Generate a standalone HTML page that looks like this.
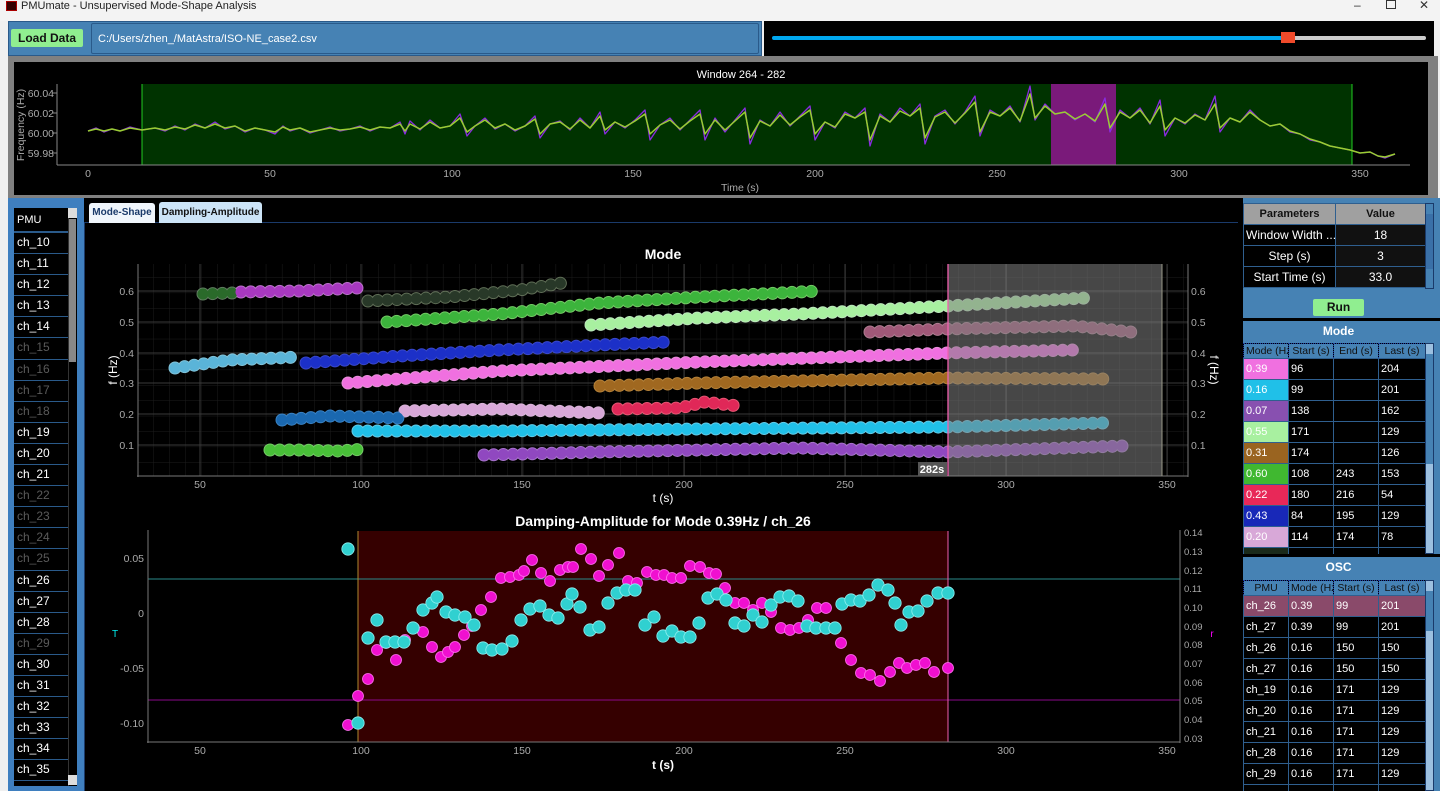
<!DOCTYPE html>
<html><head><meta charset="utf-8"><style>
*{margin:0;padding:0;box-sizing:border-box}
html,body{width:1440px;height:791px;overflow:hidden}
body{background:#f0f0f0;font-family:"Liberation Sans",sans-serif;position:relative}
.a{position:absolute}
table{border-collapse:collapse;table-layout:fixed}
td{border:1px solid #2f5f8f;color:#fff;font-size:11px;height:21px;padding:0 2px;white-space:nowrap;overflow:hidden;background:#000}
.hd td{background:#4682b4;color:#111;text-align:center;border:1px dotted #1a3aa0;height:15px;font-size:10.5px}
</style></head><body>
<!-- title bar -->
<div class="a" style="left:0;top:0;width:1440px;height:21px;background:#f3f3f3"></div>
<div class="a" style="left:6px;top:1px;width:11px;height:10px;background:#300;border:1px solid #a00"></div>
<div class="a" style="left:21px;top:0;font-size:11px;color:#222;line-height:12px">PMUmate - Unsupervised Mode-Shape Analysis</div>
<div class="a" style="left:1354px;top:-2px;font-size:12px;color:#333">–</div>
<div class="a" style="left:1386px;top:0;width:10px;height:9px;border:1px solid #333"></div>
<div class="a" style="left:1419px;top:-2px;font-size:12px;color:#333">✕</div>
<!-- top row -->
<div class="a" style="left:8px;top:21px;width:754px;height:35px;background:#4682b4;border:1px solid #2a5a8a"></div>
<div class="a" style="left:11px;top:29px;width:72px;height:18px;background:#90ee90;border-radius:2px;font-size:12px;font-weight:bold;color:#111;text-align:center;line-height:18px">Load Data</div>
<div class="a" style="left:91px;top:23px;width:668px;height:31px;background:#4682b4;border:1px solid #2a5a8a;border-radius:2px;font-size:11px;color:#fff;line-height:30px;padding-left:6px">C:/Users/zhen_/MatAstra/ISO-NE_case2.csv</div>
<div class="a" style="left:764px;top:21px;width:670px;height:35px;background:#000"></div>
<div class="a" style="left:772px;top:36px;width:515px;height:4px;background:#00a8f0;border-radius:2px"></div>
<div class="a" style="left:1290px;top:36px;width:136px;height:4px;background:#ccc;border-radius:2px"></div>
<div class="a" style="left:1281px;top:32px;width:14px;height:11px;background:#f04a2a"></div>
<!-- overview -->
<div class="a" style="left:8px;top:56px;width:1430px;height:142px;background:#808080"></div>
<div class="a" style="left:14px;top:62px;width:1414px;height:133px;background:#000"></div>
<svg class="a" style="left:0;top:0" width="1440" height="200">
<rect x="142" y="84" width="1210" height="81" fill="#003300"/>
<rect x="1051" y="84" width="65" height="81" fill="#7a1a7a"/>
<line x1="142" y1="84" x2="142" y2="165" stroke="#2c2"/><line x1="1352" y1="84" x2="1352" y2="165" stroke="#2c2"/>
<line x1="57" y1="84" x2="57" y2="165" stroke="#888"/><line x1="57" y1="165" x2="1410" y2="165" stroke="#888"/>
<g stroke="#888"><line x1="52" y1="93" x2="57" y2="93"/><line x1="52" y1="113" x2="57" y2="113"/><line x1="52" y1="133" x2="57" y2="133"/><line x1="52" y1="153" x2="57" y2="153"/></g>
<g font-size="10.5" fill="#aaa" font-family="Liberation Sans" text-anchor="end"><text x="54" y="97">60.04</text><text x="54" y="117">60.02</text><text x="54" y="137">60.00</text><text x="54" y="157">59.98</text></g>
<g font-size="10.5" fill="#aaa" font-family="Liberation Sans" text-anchor="middle"><text x="88" y="177">0</text><text x="270" y="177">50</text><text x="452" y="177">100</text><text x="633" y="177">150</text><text x="815" y="177">200</text><text x="997" y="177">250</text><text x="1179" y="177">300</text><text x="1360" y="177">350</text><text x="740" y="191">Time (s)</text></g>
<text x="24" y="125" transform="rotate(-90 24 125)" font-size="10.5" fill="#aaa" font-family="Liberation Sans" text-anchor="middle">Frequency (Hz)</text>
<text x="741" y="78" font-size="11" fill="#fff" font-family="Liberation Sans" text-anchor="middle">Window 264 - 282</text>
<g fill="none" stroke-linejoin="round">
<path d="M88,131 L96,128 104,132 112,129 120,131 130,127 142,130 155,128 165,131 175,126 185,130 195,124 205,128 215,122 225,129 235,126 245,132 255,128 265,130 275,134 283,126 290,131 300,128 310,133 320,130 330,127 340,131 350,129 360,126 370,131 380,127 390,128 400,122 405,134 410,121 420,130 430,120 440,128 450,126 460,114 467,136 475,126 485,118 495,129 505,124 515,131 525,126 535,116 540,138 550,124 560,121 570,130 580,118 590,128 600,112 605,134 615,122 625,128 635,120 645,110 650,140 660,125 670,118 680,130 690,120 700,110 705,140 715,118 725,132 735,120 745,108 750,144 760,120 770,126 780,112 790,126 800,116 810,106 815,140 825,122 835,128 845,112 855,118 865,108 870,146 880,114 890,122 900,108 910,116 920,104 925,144 935,116 945,110 955,124 965,112 975,96 980,136 990,110 1000,116 1010,106 1020,122 1030,86 1035,120 1045,104 1055,114 1065,112 1075,120 1085,114 1095,122 1105,98 1110,132 1120,110 1130,118 1140,108 1150,124 1160,100 1165,136 1175,118 1185,124 1195,114 1205,120 1215,96 1220,132 1230,118 1240,122 1250,110 1260,120 1270,126 1280,124 1290,132 1300,134 1310,140 1320,142 1330,146 1340,148 1350,150 1360,153 1370,152 1378,156 1385,158 1395,154" stroke="#8a2be2" stroke-width="1.3"/>
<path d="M88,131 L96,129 104,131 112,129 120,131 130,128 142,130 155,128 165,130 175,127 185,129 195,125 205,128 215,124 225,128 235,126 245,131 255,128 265,130 275,132 283,127 290,130 300,128 310,132 320,130 330,128 340,130 350,129 360,127 370,130 380,127 390,128 400,124 405,131 410,124 420,129 430,122 440,128 450,126 460,118 467,132 475,126 485,120 495,128 505,124 515,130 525,126 535,119 540,134 550,124 560,122 570,129 580,120 590,128 600,116 605,130 615,122 625,127 635,121 645,114 650,134 660,125 670,120 680,129 690,121 700,114 705,134 715,120 725,130 735,121 745,112 750,138 760,121 770,126 780,115 790,125 800,117 810,110 815,134 825,122 835,127 845,114 855,118 865,112 870,140 880,116 890,122 900,111 910,116 920,108 925,138 935,117 945,112 955,123 965,113 975,102 980,132 990,112 1000,116 1010,108 1020,121 1030,94 1035,118 1045,106 1055,114 1065,112 1075,119 1085,114 1095,121 1105,104 1110,128 1120,112 1130,118 1140,110 1150,123 1160,106 1165,130 1175,118 1185,123 1195,115 1205,120 1215,104 1220,128 1230,118 1240,122 1250,112 1260,120 1270,126 1280,124 1290,131 1300,134 1310,139 1320,142 1330,146 1340,148 1350,150 1360,153 1370,152 1378,156 1385,157 1395,154" stroke="#9acd32" stroke-width="1.5"/>
</g>
</svg>
<!-- left panel -->
<div class="a" style="left:8px;top:198px;width:76px;height:593px;background:#3f7fbf"></div>
<div class="a" style="left:14px;top:208px;width:54px;height:578px;background:#000"></div>
<div class="a" style="left:68px;top:208px;width:9px;height:578px;background:#000;border-left:1px solid #333"></div>
<div class="a" style="left:69px;top:219px;width:7px;height:143px;background:#888"></div>
<div class="a" style="left:68px;top:208px;width:9px;height:10px;background:#ddd"></div>
<div class="a" style="left:68px;top:775px;width:9px;height:10px;background:#ddd"></div>
<div class="a" style="left:14px;top:208px;width:54px;height:578px;overflow:hidden">
<div style="height:25px;font-size:11px;color:#fff;padding:6px 3px;border-bottom:2px solid #2a5a8a">PMU</div>
<div id="chs"></div>
</div>
<script>
var h='',n=[10,11,12,13,14,15,16,17,18,19,20,21,22,23,24,25,26,27,28,29,30,31,32,33,34,35],dim=[15,16,17,18,22,23,24,25,29];
n.forEach(function(k){h+='<div style="height:21.1px;line-height:19px;font-size:12px;padding-left:3px;border-bottom:1px solid #2a5a8a;color:'+(dim.indexOf(k)>=0?'#5a5a5a':'#fff')+'">ch_'+k+'</div>'});
document.getElementById('chs').innerHTML=h;
</script>
<!-- main -->
<div class="a" style="left:84px;top:198px;width:1156px;height:593px;background:#000"></div>
<div class="a" style="left:84px;top:222px;width:1154px;height:1px;background:#1a3a6a"></div>
<div class="a" style="left:84px;top:222px;width:1px;height:569px;background:#1a3a6a"></div>
<div class="a" style="left:89px;top:203px;width:66px;height:20px;background:#f0f6fc;border-radius:3px 3px 0 0;font-size:10px;font-weight:bold;color:#1a3a6a;text-align:center;line-height:20px">Mode-Shape</div>
<div class="a" style="left:159px;top:202px;width:103px;height:21px;background:#cce4f7;border-radius:3px 3px 0 0;font-size:10px;font-weight:bold;color:#111;text-align:center;line-height:21px">Dampling-Amplitude</div>
<svg class="a" style="left:0;top:0" width="1240" height="791" font-family="Liberation Sans">
<defs>
<pattern id="mg" x="137" y="0" width="16.1" height="15.4" patternUnits="userSpaceOnUse"><path d="M0,0 V15.4 M0,0 H16.1" stroke="#1c1c1c" fill="none"/></pattern>
</defs>
<text x="663" y="259" font-size="14" font-weight="bold" fill="#fff" text-anchor="middle">Mode</text>
<rect x="138" y="264" width="1050" height="212" fill="url(#mg)"/>
<g stroke="#3a3a3a"><line x1="138" y1="291" x2="1188" y2="291"/><line x1="138" y1="322" x2="1188" y2="322"/><line x1="138" y1="353" x2="1188" y2="353"/><line x1="138" y1="383" x2="1188" y2="383"/><line x1="138" y1="414" x2="1188" y2="414"/><line x1="138" y1="445" x2="1188" y2="445"/>
<line x1="200" y1="264" x2="200" y2="476"/><line x1="361" y1="264" x2="361" y2="476"/><line x1="522" y1="264" x2="522" y2="476"/><line x1="684" y1="264" x2="684" y2="476"/><line x1="845" y1="264" x2="845" y2="476"/><line x1="1006" y1="264" x2="1006" y2="476"/><line x1="1167" y1="264" x2="1167" y2="476"/></g>
<g stroke="#777"><line x1="138" y1="264" x2="138" y2="477"/><line x1="137" y1="476" x2="1188" y2="476"/><line x1="1188" y1="264" x2="1188" y2="477"/></g>
<g font-size="10.5" fill="#aaa" text-anchor="end"><text x="134" y="295">0.6</text><text x="134" y="326">0.5</text><text x="134" y="357">0.4</text><text x="134" y="387">0.3</text><text x="134" y="418">0.2</text><text x="134" y="449">0.1</text></g>
<g font-size="10.5" fill="#aaa"><text x="1191" y="295">0.6</text><text x="1191" y="326">0.5</text><text x="1191" y="357">0.4</text><text x="1191" y="387">0.3</text><text x="1191" y="418">0.2</text><text x="1191" y="449">0.1</text></g>
<g font-size="10.5" fill="#aaa" text-anchor="middle"><text x="200" y="488">50</text><text x="361" y="488">100</text><text x="522" y="488">150</text><text x="684" y="488">200</text><text x="845" y="488">250</text><text x="1006" y="488">300</text><text x="1167" y="488">350</text></g>
<text x="663" y="502" font-size="12" fill="#fff" text-anchor="middle">t (s)</text>
<text x="117" y="370" transform="rotate(-90 117 370)" font-size="12" fill="#fff" text-anchor="middle">f (Hz)</text>
<text x="1210" y="370" transform="rotate(90 1210 370)" font-size="12" fill="#fff" text-anchor="middle">f (Hz)</text>
<g fill="none" stroke-linecap="round" stroke-dasharray="0 9.67" stroke-linejoin="round">
<g stroke-width="13" opacity="0.9">
<polyline stroke="#6a8a6a" points="203,294 232,293"/>
<polyline stroke="#d080e0" points="241,292 300,291 358,288"/>
<polyline stroke="#6a7a60" points="368,301 450,297 520,290 562,283"/>
<polyline stroke="#80e070" points="387,322 500,314 600,303 700,297 820,291"/>
<polyline stroke="#d0ffd0" points="591,325 700,318 800,314 948,306 1085,298"/>
<polyline stroke="#c08aa0" points="870,332 948,329 1075,326 1140,333"/>
<polyline stroke="#4050e0" points="306,363 400,356 500,350 600,345 668,342"/>
<polyline stroke="#90d8f0" points="175,368 230,360 300,357"/>
<polyline stroke="#ffa0f0" points="348,383 500,371 700,362 948,353 1075,350"/>
<polyline stroke="#c89040" points="600,386 700,383 948,378 1103,379"/>
<polyline stroke="#ff6080" points="618,409 680,408 705,402 738,406"/>
<polyline stroke="#f0c8f0" points="405,411 500,409 600,413"/>
<polyline stroke="#4090d8" points="282,420 330,416 398,418"/>
<polyline stroke="#70e0ff" points="358,431 500,431 700,429 948,427 1103,423"/>
<polyline stroke="#b880e0" points="484,455 600,452 800,448 948,452 1122,446"/>
<polyline stroke="#80e070" points="270,450 300,450 340,451 365,449"/>
</g>
<g stroke-width="11">
<polyline stroke="#2a6a2a" points="203,294 232,293"/>
<polyline stroke="#a838c0" points="241,292 300,291 358,288"/>
<polyline stroke="#283828" points="368,301 450,297 520,290 562,283"/>
<polyline stroke="#3cb43c" points="387,322 500,314 600,303 700,297 820,291"/>
<polyline stroke="#a8f0a0" points="591,325 700,318 800,314 948,306 1085,298"/>
<polyline stroke="#a05878" points="870,332 948,329 1075,326 1140,333"/>
<polyline stroke="#1c30c8" points="306,363 400,356 500,350 600,345 668,342"/>
<polyline stroke="#5ab4d8" points="175,368 230,360 300,357"/>
<polyline stroke="#f070e0" points="348,383 500,371 700,362 948,353 1075,350"/>
<polyline stroke="#a06820" points="600,386 700,383 948,378 1103,379"/>
<polyline stroke="#e02858" points="618,409 680,408 705,402 738,406"/>
<polyline stroke="#d8a8d8" points="405,411 500,409 600,413"/>
<polyline stroke="#1a68b0" points="282,420 330,416 398,418"/>
<polyline stroke="#20c0e8" points="358,431 500,431 700,429 948,427 1103,423"/>
<polyline stroke="#9048c0" points="484,455 600,452 800,448 948,452 1122,446"/>
<polyline stroke="#48c038" points="270,450 300,450 340,451 365,449"/>
</g></g>
<rect x="948" y="264" width="214" height="212" fill="rgba(130,130,130,0.55)"/>
<line x1="1162" y1="264" x2="1162" y2="476" stroke="#998"/>
<line x1="948" y1="264" x2="948" y2="476" stroke="#f060b0" stroke-width="1.3"/>
<rect x="918" y="462" width="29" height="14" fill="#555"/>
<text x="932" y="473" font-size="11" font-weight="bold" fill="#fff" text-anchor="middle">282s</text>
<!-- damping -->
<text x="663" y="526" font-size="14" font-weight="bold" fill="#fff" text-anchor="middle">Damping-Amplitude for Mode 0.39Hz / ch_26</text>
<rect x="358" y="531" width="590" height="211" fill="#350000"/>
<line x1="148" y1="579" x2="1180" y2="579" stroke="#2a8a8a"/>
<line x1="148" y1="700" x2="1180" y2="700" stroke="#8a0a8a"/>
<line x1="358" y1="531" x2="358" y2="742" stroke="#b08a30"/>
<line x1="948" y1="531" x2="948" y2="742" stroke="#f060b0"/>
<g stroke="#777"><line x1="148" y1="530" x2="148" y2="743"/><line x1="147" y1="742" x2="1180" y2="742"/><line x1="1180" y1="530" x2="1180" y2="743"/></g>
<g font-size="10.5" fill="#aaa" text-anchor="end"><text x="144" y="562">0.05</text><text x="144" y="617">0</text><text x="144" y="672">-0.05</text><text x="144" y="727">-0.10</text></g>
<g font-size="9.5" fill="#aaa"><text x="1184" y="536">0.14</text><text x="1184" y="555">0.13</text><text x="1184" y="574">0.12</text><text x="1184" y="592">0.11</text><text x="1184" y="611">0.10</text><text x="1184" y="630">0.09</text><text x="1184" y="648">0.08</text><text x="1184" y="667">0.07</text><text x="1184" y="686">0.06</text><text x="1184" y="704">0.05</text><text x="1184" y="723">0.04</text><text x="1184" y="742">0.03</text></g>
<g font-size="10.5" fill="#aaa" text-anchor="middle"><text x="200" y="754">50</text><text x="361" y="754">100</text><text x="522" y="754">150</text><text x="684" y="754">200</text><text x="845" y="754">250</text><text x="1006" y="754">300</text><text x="1167" y="754">350</text></g>
<text x="663" y="769" font-size="12" font-weight="bold" fill="#fff" text-anchor="middle">t (s)</text>
<text x="115" y="637" font-size="10" fill="#0ee" text-anchor="middle">T</text>
<text x="1212" y="637" font-size="10" fill="#f0f" text-anchor="middle">r</text>
<g id="mg2" fill="#f010d0" stroke="#ff70f0" stroke-width="0.8"></g>
<g id="cy2" fill="#30d0d0" stroke="#90f0f0" stroke-width="0.8"></g>
</svg>
<script>
var M=[[348,725],[358,696],[368,679],[377,650],[386,643],[396,660],[405,640],[414,628],[423,632],[432,647],[441,657],[448,652],[455,647],[464,635],[472,626],[481,610],[491,597],[501,578],[510,577],[519,575],[524,571],[532,560],[541,573],[550,581],[560,570],[568,567],[573,567],[581,549],[591,559],[599,576],[608,565],[619,553],[628,581],[637,583],[647,572],[656,575],[664,575],[672,578],[681,578],[690,566],[700,567],[709,573],[716,574],[725,588],[735,603],[744,603],[753,610],[762,603],[771,612],[781,628],[790,630],[799,628],[808,620],[817,608],[826,608],[841,643],[851,660],[861,673],[870,675],[880,681],[890,672],[899,663],[907,668],[916,665],[925,663],[934,672],[948,668]];
var C=[[348,549],[358,723],[368,638],[377,620],[386,642],[395,642],[404,642],[413,628],[423,610],[432,603],[437,597],[446,612],[455,615],[465,617],[474,625],[483,648],[492,650],[502,649],[512,641],[521,620],[530,609],[540,606],[549,615],[558,618],[567,604],[572,594],[580,607],[590,630],[599,627],[608,603],[617,593],[626,590],[635,590],[645,625],[654,617],[663,636],[672,631],[681,637],[690,637],[699,623],[708,598],[717,594],[726,600],[735,623],[744,626],[753,615],[762,622],[771,605],[780,597],[789,596],[798,601],[807,626],[816,628],[826,628],[835,628],[842,604],[851,600],[860,601],[869,595],[878,585],[888,590],[895,603],[901,625],[909,612],[918,611],[927,601],[938,593],[948,593]];
function f(a,r){return a.map(function(p){return '<circle cx="'+p[0]+'" cy="'+p[1]+'" r="'+r+'"/>'}).join('')}
document.getElementById('mg2').innerHTML=f(M,5.5);
document.getElementById('cy2').innerHTML=f(C,6.2);
</script>
<!-- right panel -->
<div class="a" style="left:1240px;top:198px;width:200px;height:593px;background:#4682b4"></div>
<div class="a" style="left:1240px;top:198px;width:3px;height:593px;background:#000"></div>
<div class="a" style="left:1243px;top:203px;width:182px">
<table style="width:182px"><colgroup><col style="width:92px"><col style="width:90px"></colgroup>
<tr><td style="background:#a0a0a0;color:#111;font-weight:bold;text-align:center;height:21px">Parameters</td><td style="background:#a0a0a0;color:#111;font-weight:bold;text-align:center">Value</td></tr>
<tr><td style="font-size:12px">Window Width ...</td><td style="background:#111;text-align:center;font-size:12px">18</td></tr>
<tr><td style="text-align:center;font-size:12px">Step (s)</td><td style="background:#111;text-align:center;font-size:12px">3</td></tr>
<tr><td style="text-align:center;font-size:12px">Start Time (s)</td><td style="background:#111;text-align:center;font-size:12px">33.0</td></tr>
</table></div>
<div class="a" style="left:1425px;top:203px;width:9px;height:86px;background:#4682b4;border:1px solid #1a3a6a"><div style="margin-top:10px;height:55px;background:#3a70a8"></div></div>
<div class="a" style="left:1313px;top:299px;width:51px;height:17px;background:#90ee90;border-radius:2px;font-size:12px;font-weight:bold;text-align:center;line-height:17px;color:#111">Run</div>
<div class="a" style="left:1240px;top:318px;width:200px;height:3px;background:#000"></div>
<div class="a" style="left:1243px;top:321px;width:191px;height:20px;font-size:12px;font-weight:bold;color:#fff;text-align:center;line-height:20px">Mode</div>
<div class="a" style="left:1243px;top:343px;width:182px;height:211px;overflow:hidden;background:#000">
<table style="width:182px"><colgroup><col style="width:45px"><col style="width:45px"><col style="width:45px"><col style="width:47px"></colgroup>
<tr class="hd"><td>Mode (Hz)</td><td>Start (s)</td><td>End (s)</td><td>Last (s)</td></tr>
<tr><td style="background:#f070e0">0.39</td><td>96</td><td></td><td>204</td></tr>
<tr><td style="background:#20c0e8">0.16</td><td>99</td><td></td><td>201</td></tr>
<tr><td style="background:#8850b0">0.07</td><td>138</td><td></td><td>162</td></tr>
<tr><td style="background:#a8f0a0">0.55</td><td>171</td><td></td><td>129</td></tr>
<tr><td style="background:#9a6420">0.31</td><td>174</td><td></td><td>126</td></tr>
<tr><td style="background:#40b830">0.60</td><td>108</td><td>243</td><td>153</td></tr>
<tr><td style="background:#e82858">0.22</td><td>180</td><td>216</td><td>54</td></tr>
<tr><td style="background:#1828b8">0.43</td><td>84</td><td>195</td><td>129</td></tr>
<tr><td style="background:#d8a8d8">0.20</td><td>114</td><td>174</td><td>78</td></tr>
<tr><td style="background:#1a2a1a"></td><td></td><td></td><td></td></tr>
</table></div>
<div class="a" style="left:1425px;top:343px;width:9px;height:211px;background:#9cc0e0;border:1px solid #1a3a6a"><div style="margin-top:10px;height:110px;background:#4682b4"></div></div>
<div class="a" style="left:1240px;top:554px;width:200px;height:3px;background:#000"></div>
<div class="a" style="left:1243px;top:557px;width:191px;height:20px;font-size:12px;font-weight:bold;color:#fff;text-align:center;line-height:20px">OSC</div>
<div class="a" style="left:1243px;top:580px;width:182px;height:211px;overflow:hidden;background:#000">
<table style="width:182px"><colgroup><col style="width:45px"><col style="width:45px"><col style="width:45px"><col style="width:47px"></colgroup>
<tr class="hd"><td>PMU</td><td>Mode (Hz)</td><td>Start (s)</td><td>Last (s)</td></tr>
<tr><td style="background:#8a4a6a">ch_26</td><td style="background:#8a4a6a">0.39</td><td style="background:#8a4a6a">99</td><td style="background:#8a4a6a">201</td></tr>
<tr><td>ch_27</td><td>0.39</td><td>99</td><td>201</td></tr>
<tr><td>ch_26</td><td>0.16</td><td>150</td><td>150</td></tr>
<tr><td>ch_27</td><td>0.16</td><td>150</td><td>150</td></tr>
<tr><td>ch_19</td><td>0.16</td><td>171</td><td>129</td></tr>
<tr><td>ch_20</td><td>0.16</td><td>171</td><td>129</td></tr>
<tr><td>ch_21</td><td>0.16</td><td>171</td><td>129</td></tr>
<tr><td>ch_28</td><td>0.16</td><td>171</td><td>129</td></tr>
<tr><td>ch_29</td><td>0.16</td><td>171</td><td>129</td></tr>
<tr><td></td><td></td><td></td><td></td></tr>
</table></div>
<div class="a" style="left:1425px;top:580px;width:9px;height:211px;background:#9cc0e0;border:1px solid #1a3a6a"><div style="margin-top:10px;height:40px;background:#4682b4"></div></div>
</body></html>
